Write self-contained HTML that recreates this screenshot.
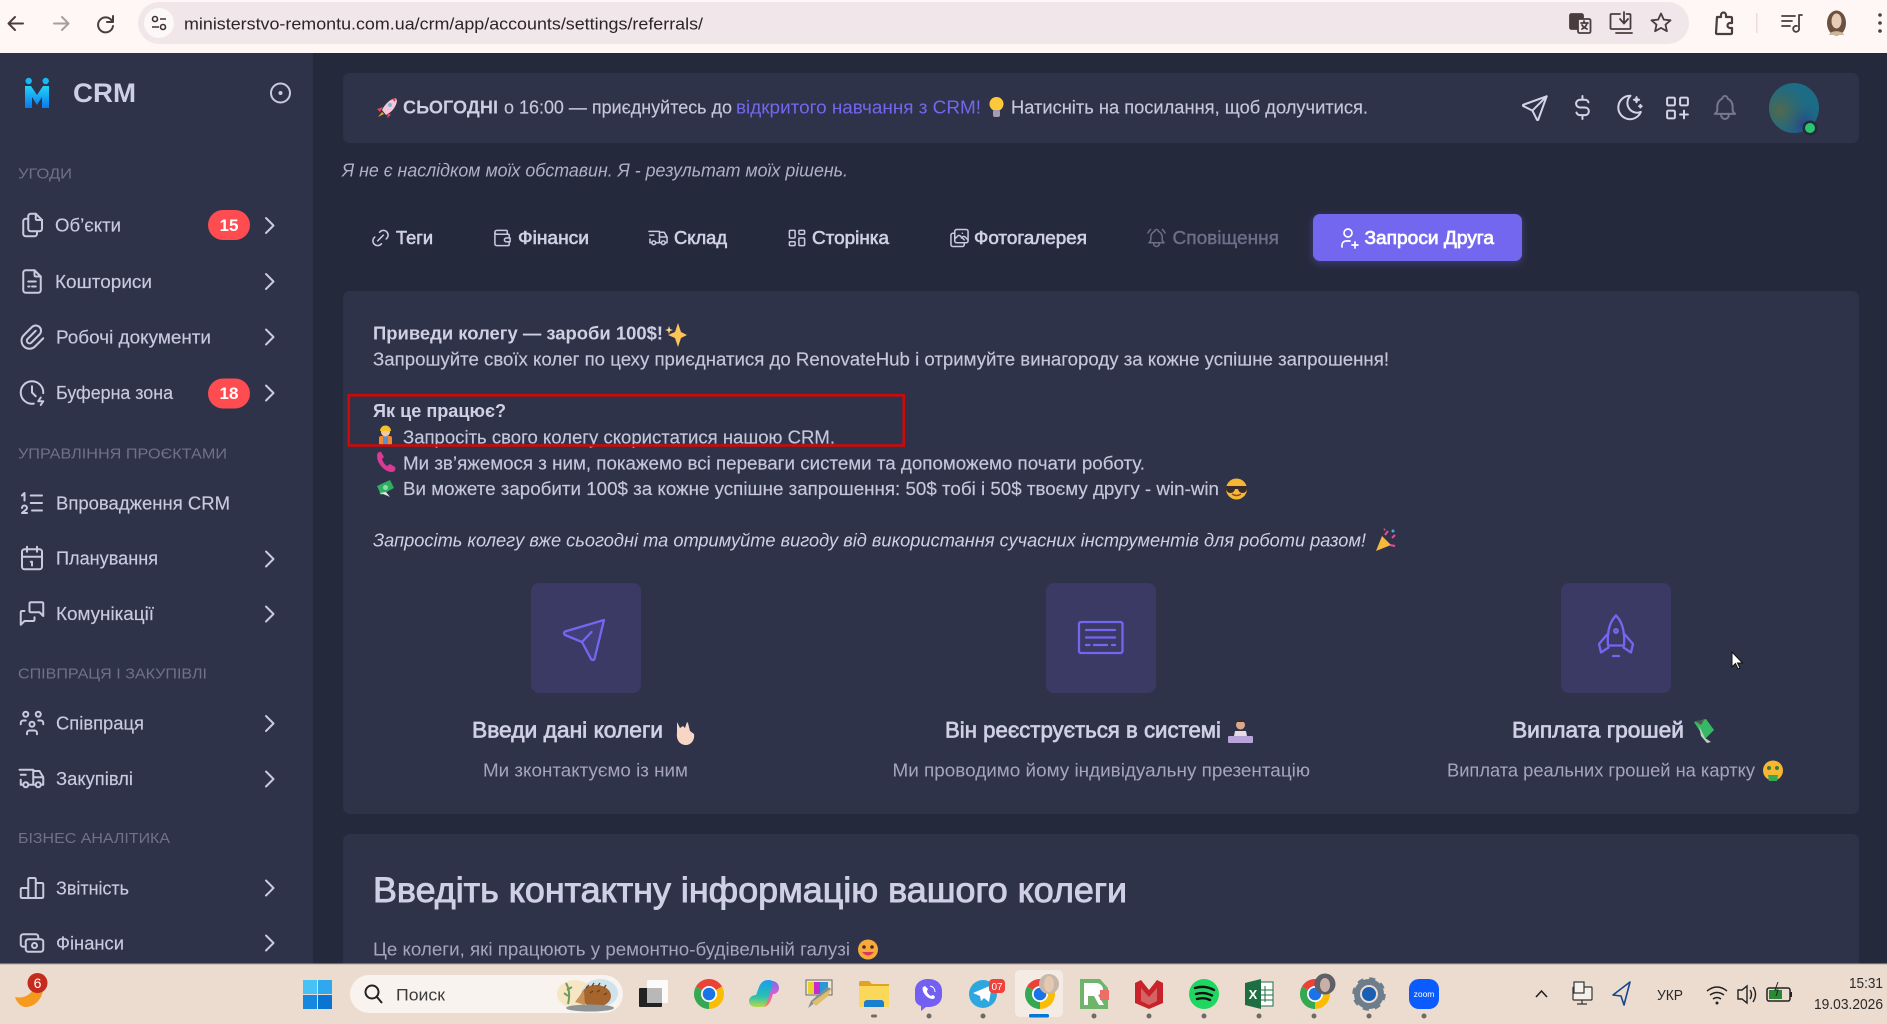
<!DOCTYPE html>
<html lang="uk"><head><meta charset="utf-8"><title>CRM</title>
<style>
html,body{margin:0;padding:0;width:1887px;height:1024px;overflow:hidden;background:#25293c}
svg{display:block;font-family:"Liberation Sans","Noto Sans CJK SC",sans-serif}
.i{fill:none;stroke:#c9cae0;stroke-width:1.6;stroke-linecap:round;stroke-linejoin:round}
.s{font-size:18px;fill:#c9cae0;stroke:#c9cae0;stroke-width:.15}
.h{font-size:15px;fill:#6f7188}
.b{font-size:18px;fill:#c6c7dc;stroke:#c6c7dc;stroke-width:.15}
.tab{font-size:18px;fill:#cfd0e4;stroke:#cfd0e4;stroke-width:.6}
.bd{font-size:18px;font-weight:bold;fill:#cfd0e4}
.sub{font-size:18px;fill:#a5a6bd}
.t3{font-size:22px;fill:#cfd0e6;stroke:#cfd0e6;stroke-width:.7}
.sys{font-size:15px;fill:#2a2a2a}
</style></head><body>
<svg xmlns="http://www.w3.org/2000/svg" width="1887" height="1024" viewBox="0 0 1887 1024">
<defs>
<path id="chev" d="M266 -7.500l7.500 7.500l-7.500 7.500" fill="none" stroke="#c9cae0" stroke-width="2" stroke-linecap="round" stroke-linejoin="round"/>
<linearGradient id="lg" x1="0" y1="0" x2="0" y2="1"><stop offset="0" stop-color="#22d3f5"/><stop offset="1" stop-color="#0a78f0"/></linearGradient>
<linearGradient id="cp1" x1="0" y1="0" x2="0" y2="1"><stop offset="0" stop-color="#1c9cf0"/><stop offset=".6" stop-color="#28c0b0"/><stop offset="1" stop-color="#b8d84a"/></linearGradient>
<linearGradient id="cp2" x1="0" y1="0" x2="0" y2="1"><stop offset="0" stop-color="#7c6cf0"/><stop offset=".55" stop-color="#e060c8"/><stop offset="1" stop-color="#f58a3a"/></linearGradient>
<radialGradient id="av1" cx=".65" cy=".82" r=".5"><stop offset="0" stop-color="#2a4488"/><stop offset="1" stop-color="#1a6a82" stop-opacity="0"/></radialGradient>
<radialGradient id="av2" cx=".22" cy=".55" r=".55"><stop offset="0" stop-color="#55694a"/><stop offset="1" stop-color="#3c6660" stop-opacity="0"/></radialGradient>
<g id="chrome"><path d="M15 15L2 7.500A15 15 0 0 1 28 7.500Z" fill="#ea4335"/><path d="M15 15L28 7.500A15 15 0 0 1 15 30Z" fill="#fbbc04"/><path d="M15 15L15 30A15 15 0 0 1 2 7.500Z" fill="#34a853"/><circle cx="15" cy="15" r="8" fill="#fff"/><circle cx="15" cy="15" r="6.300" fill="#1a73e8"/></g>
</defs>

<!-- browser bar -->
<rect width="1887" height="53" fill="#fff7f5"/>
<g fill="none" stroke="#4a3d40" stroke-width="2" stroke-linecap="round" stroke-linejoin="round">
<path d="M23 23.500H9M15 17l-6.500 6.500L15 30"/>
<path d="M54 23.500h14M62 17l6.500 6.500L62 30" stroke="#a89c9f"/>
<path d="M112 21a7.500 7.500 0 1 0 1 5M113 16v6h-6"/>
</g>
<rect x="138" y="2" width="1551" height="42" rx="21" fill="#f1e6e9"/>
<ellipse cx="159" cy="23" rx="15" ry="15" fill="#fdf8f8"/>
<g fill="none" stroke="#3d3336" stroke-width="1.600"><circle cx="155" cy="19" r="2.500"/><circle cx="163" cy="27" r="2.500"/><path d="M160 19h6M152 27h7"/></g>
<text x="184" y="29.500" font-size="17" fill="#2c2426" textLength="519" lengthAdjust="spacingAndGlyphs">ministerstvo-remontu.com.ua/crm/app/accounts/settings/referrals/</text>
<g fill="none" stroke="#4a3d40" stroke-width="1.800" stroke-linecap="round" stroke-linejoin="round">
<rect x="1570" y="14" width="13" height="15" rx="1.500" fill="#4a3d40"/><rect x="1578" y="19" width="12.500" height="14" rx="1.500" fill="#f1e6e9"/><path d="M1581 23h7M1584 21v2M1587 23c-.5 3-3 5-5 6M1582 25c1 2 3 3 5 4"/>
<path d="M1620 14h-8.500a1 1 0 0 0 -1 1v13a1 1 0 0 0 1 1h18a1 1 0 0 0 1 -1v-13a1 1 0 0 0 -1 -1h-3M1624 12v11M1620 19l4 4.500l4-4.500M1616 33h16" />
<path d="M1661 13.500l2.800 6.100 6.700.7-5 4.400 1.400 6.500-5.900-3.300-5.900 3.300 1.400-6.500-5-4.400 6.700-.7z"/>
<path d="M1717 17h4v-2a2.500 2.500 0 0 1 5 0v2h5a1 1 0 0 1 1 1v5h-2a2.500 2.500 0 0 0 0 5h2v5a1 1 0 0 1 -1 1h-14a1 1 0 0 1 -1 -1z" stroke-width="2.200"/>
<path d="M1782 16h13M1782 21h10M1782 26h8M1799 15v13a3 3 0 1 1 -2 -2M1799 15h3"/>
</g>
<rect x="1756" y="13" width="1.500" height="20" fill="#eedcdc"/>
<ellipse cx="1836.500" cy="23" rx="9.500" ry="12.500" fill="#6d5140"/><ellipse cx="1836.500" cy="21" rx="5" ry="7.500" fill="#e8cdb6"/><path d="M1829 35c1-5 14-5 15 0z" fill="#cdb59c"/>
<g fill="#4a3d40"><circle cx="1880" cy="15" r="1.800"/><circle cx="1880" cy="23" r="1.800"/><circle cx="1880" cy="31" r="1.800"/></g>

<!-- main bg -->
<rect x="0" y="53" width="1887" height="911" fill="#25293c"/>
<!-- sidebar -->
<rect x="0" y="53" width="313" height="911" fill="#2f3349"/>
<circle cx="28.700" cy="81" r="3.200" fill="#18b8f5"/><circle cx="45.700" cy="81" r="3.200" fill="#18b8f5"/>
<path d="M25 86h6l6 9 6-9h6v22h-7V97l-5 8-5-8v11h-7z" fill="url(#lg)"/>
<text x="73" y="102" font-size="27" font-weight="bold" fill="#cdcfe6" textLength="63" lengthAdjust="spacingAndGlyphs">CRM</text>
<circle cx="280.500" cy="93" r="9.500" fill="none" stroke="#c9cae0" stroke-width="2"/><circle cx="280.500" cy="93" r="2" fill="#c9cae0"/>

<text class="h" x="18" y="178.500" textLength="54" lengthAdjust="spacingAndGlyphs">УГОДИ</text>
<g class="i" transform="translate(17 210) scale(1.25)"><path d="M15 3v4a1 1 0 0 0 1 1h4"/><path d="M18 17h-7a2 2 0 0 1 -2 -2v-10a2 2 0 0 1 2 -2h4l5 5v7a2 2 0 0 1 -2 2z"/><path d="M16 17v2a2 2 0 0 1 -2 2h-7a2 2 0 0 1 -2 -2v-10a2 2 0 0 1 2 -2h2"/></g>
<text class="s" x="55" y="231.500" textLength="66" lengthAdjust="spacingAndGlyphs">Об’єкти</text>
<rect x="208" y="210" width="42" height="30" rx="15" fill="#ff4c51"/><text x="229" y="231" font-size="17" font-weight="bold" fill="#fff" text-anchor="middle">15</text>
<use href="#chev" y="225.500"/>

<g class="i" transform="translate(17 266.500) scale(1.25)"><path d="M14 3v4a1 1 0 0 0 1 1h4"/><path d="M17 21h-10a2 2 0 0 1 -2 -2v-14a2 2 0 0 1 2 -2h7l5 5v11a2 2 0 0 1 -2 2z"/><path d="M9 12h6M12 16h3M9 16h1"/></g>
<text class="s" x="55" y="288" textLength="97" lengthAdjust="spacingAndGlyphs">Кошториси</text>
<use href="#chev" y="281.500"/>

<g class="i" transform="translate(17 322) scale(1.25)"><path d="M15 7l-6.500 6.500a1.500 1.500 0 0 0 3 3l6.500 -6.500a3 3 0 0 0 -6 -6l-6.500 6.500a4.500 4.500 0 0 0 9 9l6.500 -6.500"/></g>
<text class="s" x="56" y="343.500" textLength="155" lengthAdjust="spacingAndGlyphs">Робочі документи</text>
<use href="#chev" y="337"/>

<g class="i" transform="translate(17 377.500) scale(1.25)"><path d="M20.984 12.530a9 9 0 1 0 -7.552 8.355"/><path d="M12 7v5l3 3"/><path d="M19 16l-2 3h4l-2 3"/></g>
<text class="s" x="56" y="399" textLength="117" lengthAdjust="spacingAndGlyphs">Буферна зона</text>
<rect x="208" y="378.500" width="42" height="30" rx="15" fill="#ff4c51"/><text x="229" y="399" font-size="17" font-weight="bold" fill="#fff" text-anchor="middle">18</text>
<use href="#chev" y="393"/>

<text class="h" x="18" y="458.500" textLength="209" lengthAdjust="spacingAndGlyphs">УПРАВЛІННЯ ПРОЄКТАМИ</text>
<g class="i" transform="translate(17 488) scale(1.25)"><path d="M11 6h9M11 12h9M12 18h8M4 16a2 2 0 1 1 4 0c0 .591 -.5 1 -1 1.500l-3 2.500h4M6 10v-6l-2 2"/></g>
<text class="s" x="56" y="509.500" textLength="174" lengthAdjust="spacingAndGlyphs">Впровадження CRM</text>

<g class="i" transform="translate(17 543) scale(1.25)"><path d="M4 7a2 2 0 0 1 2 -2h12a2 2 0 0 1 2 2v12a2 2 0 0 1 -2 2h-12a2 2 0 0 1 -2 -2v-12zM16 3v4M8 3v4M4 11h16M11 15h1M12 15v3"/></g>
<text class="s" x="56" y="564.500" textLength="102" lengthAdjust="spacingAndGlyphs">Планування</text>
<use href="#chev" y="559"/>

<g class="i" transform="translate(17 598.500) scale(1.25)"><path d="M21 14l-3 -3h-7a1 1 0 0 1 -1 -1v-6a1 1 0 0 1 1 -1h9a1 1 0 0 1 1 1v10"/><path d="M14 15v2a1 1 0 0 1 -1 1h-7l-3 3v-10a1 1 0 0 1 1 -1h2"/></g>
<text class="s" x="56" y="620" textLength="98" lengthAdjust="spacingAndGlyphs">Комунікації</text>
<use href="#chev" y="614"/>

<text class="h" x="18" y="678.500" textLength="189" lengthAdjust="spacingAndGlyphs">СПІВПРАЦЯ І ЗАКУПІВЛІ</text>
<g class="i" transform="translate(17 708) scale(1.25)"><path d="M10 13a2 2 0 1 0 4 0a2 2 0 0 0 -4 0M8 21v-1a2 2 0 0 1 2 -2h4a2 2 0 0 1 2 2v1M15 5a2 2 0 1 0 4 0a2 2 0 0 0 -4 0M17 10h2a2 2 0 0 1 2 2v1M5 5a2 2 0 1 0 4 0a2 2 0 0 0 -4 0M3 13v-1a2 2 0 0 1 2 -2h2"/></g>
<text class="s" x="56" y="729.500" textLength="88" lengthAdjust="spacingAndGlyphs">Співпраця</text>
<use href="#chev" y="723.500"/>

<g class="i" transform="translate(17 763.500) scale(1.25)"><path d="M7 17m-2 0a2 2 0 1 0 4 0a2 2 0 1 0 -4 0M17 17m-2 0a2 2 0 1 0 4 0a2 2 0 1 0 -4 0M5 17h-2v-4m-1 -8h11v12m-4 0h6m4 0h2v-6h-8m0 -5h5l3 5M3 9l4 0"/></g>
<text class="s" x="56" y="785" textLength="77" lengthAdjust="spacingAndGlyphs">Закупівлі</text>
<use href="#chev" y="779"/>

<text class="h" x="18" y="843" textLength="152" lengthAdjust="spacingAndGlyphs">БІЗНЕС АНАЛІТИКА</text>
<g class="i" transform="translate(17 873) scale(1.25)"><path d="M3 13a1 1 0 0 1 1 -1h4a1 1 0 0 1 1 1v6a1 1 0 0 1 -1 1h-4a1 1 0 0 1 -1 -1zM15 9a1 1 0 0 1 1 -1h4a1 1 0 0 1 1 1v10a1 1 0 0 1 -1 1h-4a1 1 0 0 1 -1 -1zM9 5a1 1 0 0 1 1 -1h4a1 1 0 0 1 1 1v14a1 1 0 0 1 -1 1h-4a1 1 0 0 1 -1 -1zM4 20h14"/></g>
<text class="s" x="56" y="894.500" textLength="73" lengthAdjust="spacingAndGlyphs">Звітність</text>
<use href="#chev" y="888"/>

<g class="i" transform="translate(17 928) scale(1.25)"><path d="M7 9m0 2a2 2 0 0 1 2 -2h10a2 2 0 0 1 2 2v6a2 2 0 0 1 -2 2h-10a2 2 0 0 1 -2 -2zM14 14m-2 0a2 2 0 1 0 4 0a2 2 0 1 0 -4 0M17 9v-2a2 2 0 0 0 -2 -2h-10a2 2 0 0 0 -2 2v6a2 2 0 0 0 2 2h2"/></g>
<text class="s" x="56" y="949.500" textLength="68" lengthAdjust="spacingAndGlyphs">Фінанси</text>
<use href="#chev" y="943"/>

<!-- top bar -->
<rect x="343" y="73" width="1516" height="70" rx="7" fill="#2f3349"/>
<path d="M396 98c-6 1-11 6-14 12l4 5c6-3 10-8 11-14z" fill="#f3c8d8"/><path d="M396 98l-4 1 3 3z" fill="#e8455a"/><path d="M383 107l-6 2 3 3zM388 113l-1 5 4-3z" fill="#e8455a"/><path d="M378 117l4-5 2 2z" fill="#f59e2e"/><circle cx="390" cy="105" r="2" fill="#7fb4e0"/>
<text class="bd" x="403" y="113.500" textLength="95" lengthAdjust="spacingAndGlyphs">СЬОГОДНІ</text>
<text class="b" x="504" y="113.500" textLength="228" lengthAdjust="spacingAndGlyphs">о 16:00 — приєднуйтесь до</text>
<text x="736" y="113.500" font-size="18" fill="#7367f0" textLength="245" lengthAdjust="spacingAndGlyphs">відкритого навчання з CRM!</text>
<circle cx="996.500" cy="104" r="7" fill="#fdc83a"/><rect x="993" y="110" width="7" height="7" rx="2" fill="#a69bb0"/>
<text class="b" x="1011" y="113.500" textLength="357" lengthAdjust="spacingAndGlyphs">Натисніть на посилання, щоб долучитися.</text>
<g class="i" style="stroke-width:1.550;stroke:#d3d4e8">
<g transform="translate(1519.400 92.400) scale(1.300)"><path d="M10 14l11 -11M21 3l-6.500 18a.55 .55 0 0 1 -1 0l-3.500 -7l-7 -3.500a.55 .55 0 0 1 0 -1l18 -6.500"/></g>
<g transform="translate(1567.100 92.100) scale(1.280)"><path d="M16.700 8a3 3 0 0 0 -2.700 -2h-4a3 3 0 0 0 0 6h4a3 3 0 0 1 0 6h-4a3 3 0 0 1 -2.700 -2M12 3v3m0 12v3"/></g>
<g transform="translate(1614.400 91.900) scale(1.300)"><path d="M12 3c.132 0 .263 0 .393 0a7.500 7.500 0 0 0 7.920 12.446a9 9 0 1 1 -8.313 -12.454zM17 4a2 2 0 0 0 2 2a2 2 0 0 0 -2 2a2 2 0 0 0 -2 -2a2 2 0 0 0 2 -2M19 11h2m-1 -1v2"/></g>
<g transform="translate(1661.900 92.400) scale(1.300)"><path d="M5 4h4a1 1 0 0 1 1 1v4a1 1 0 0 1 -1 1h-4a1 1 0 0 1 -1 -1v-4a1 1 0 0 1 1 -1M15 4h4a1 1 0 0 1 1 1v4a1 1 0 0 1 -1 1h-4a1 1 0 0 1 -1 -1v-4a1 1 0 0 1 1 -1M5 14h4a1 1 0 0 1 1 1v4a1 1 0 0 1 -1 1h-4a1 1 0 0 1 -1 -1v-4a1 1 0 0 1 1 -1M14 17h6m-3 -3v6"/></g>
<g transform="translate(1709.600 92.100) scale(1.280)" style="stroke:#77788f"><path d="M10 5a2 2 0 1 1 4 0a7 7 0 0 1 4 6v3a4 4 0 0 0 2 3h-16a4 4 0 0 0 2 -3v-3a7 7 0 0 1 4 -6M9 17v1a3 3 0 0 0 6 0v-1"/></g>
</g>
<circle cx="1794" cy="108" r="25" fill="#1d6c86"/><circle cx="1794" cy="108" r="25" fill="url(#av1)"/><circle cx="1794" cy="108" r="25" fill="url(#av2)"/>
<circle cx="1810" cy="128" r="7.500" fill="#25293c"/><circle cx="1810" cy="128" r="5" fill="#28c76f"/>

<text x="342" y="176.500" font-size="18" font-style="italic" fill="#b0b1c6" textLength="506" lengthAdjust="spacingAndGlyphs">Я не є наслідком моїх обставин. Я - результат моїх рішень.</text>

<!-- tabs -->
<g class="i">
<g transform="translate(369.100 226.600) scale(.95)"><path d="M9 15l6 -6M11 6l.463 -.536a5 5 0 0 1 7.071 7.072l-.534 .464M13 18l-.397 .534a5.068 5.068 0 0 1 -7.127 0a4.972 4.972 0 0 1 0 -7.071l.524 -.463"/></g>
<g transform="translate(491.100 226.600) scale(.95)"><path d="M17 8v-3a1 1 0 0 0 -1 -1h-10a2 2 0 0 0 0 4h12a1 1 0 0 1 1 1v3m0 4v3a1 1 0 0 1 -1 1h-12a2 2 0 0 1 -2 -2v-12M20 12v4h-4a2 2 0 0 1 0 -4h4"/></g>
<g transform="translate(647.100 226.600) scale(.95)"><path d="M7 17m-2 0a2 2 0 1 0 4 0a2 2 0 1 0 -4 0M17 17m-2 0a2 2 0 1 0 4 0a2 2 0 1 0 -4 0M5 17h-2v-4m-1 -8h11v12m-4 0h6m4 0h2v-6h-8m0 -5h5l3 5M3 9l4 0"/></g>
<g transform="translate(785.600 226.600) scale(.95)"><path d="M5 4h4a1 1 0 0 1 1 1v6a1 1 0 0 1 -1 1h-4a1 1 0 0 1 -1 -1v-6a1 1 0 0 1 1 -1M5 16h4a1 1 0 0 1 1 1v2a1 1 0 0 1 -1 1h-4a1 1 0 0 1 -1 -1v-2a1 1 0 0 1 1 -1M15 12h4a1 1 0 0 1 1 1v6a1 1 0 0 1 -1 1h-4a1 1 0 0 1 -1 -1v-6a1 1 0 0 1 1 -1M15 4h4a1 1 0 0 1 1 1v2a1 1 0 0 1 -1 1h-4a1 1 0 0 1 -1 -1v-2a1 1 0 0 1 1 -1"/></g>
<g transform="translate(948.100 226.600) scale(.95)"><rect x="7" y="3" width="14" height="14" rx="2"/><path d="M17 17v2a2 2 0 0 1 -2 2h-10a2 2 0 0 1 -2 -2v-10a2 2 0 0 1 2 -2h2M7 13l3 -3c.9 -.9 2 -.9 3 0l4 4M14 12l1 -1c.9 -.9 2 -.9 3 0l3 3M15 7h.01"/></g>
<g transform="translate(1145.100 226.600) scale(.95)" style="stroke:#6d6f87"><path d="M10 5a2 2 0 1 1 4 0a7 7 0 0 1 4 6v3a4 4 0 0 0 2 3h-16a4 4 0 0 0 2 -3v-3a7 7 0 0 1 4 -6M9 17v1a3 3 0 0 0 6 0v-1M21 6.727a11.050 11.050 0 0 0 -2.794 -3.727M3 6.727a11.050 11.050 0 0 1 2.792 -3.727"/></g>
</g>
<text class="tab" x="396" y="244" textLength="37" lengthAdjust="spacingAndGlyphs">Теги</text>
<text class="tab" x="518" y="244" textLength="71" lengthAdjust="spacingAndGlyphs">Фінанси</text>
<text class="tab" x="674" y="244" textLength="53" lengthAdjust="spacingAndGlyphs">Склад</text>
<text class="tab" x="812" y="244" textLength="77" lengthAdjust="spacingAndGlyphs">Сторінка</text>
<text class="tab" x="974" y="244" textLength="113" lengthAdjust="spacingAndGlyphs">Фотогалерея</text>
<text x="1172.500" y="244" font-size="18" fill="#6d6f87" stroke="#6d6f87" stroke-width=".4" textLength="106.500" lengthAdjust="spacingAndGlyphs">Сповіщення</text>
<rect x="1313" y="216" width="209" height="47" rx="6" fill="#7367f0" opacity=".35" style="filter:blur(4px)"/>
<rect x="1313" y="214" width="209" height="47" rx="7" fill="#7367f0"/>
<g class="i" style="stroke:#fff;stroke-width:1.700" transform="translate(1336 226)"><path d="M8 7a4 4 0 1 0 8 0a4 4 0 0 0 -8 0M16 19h6M19 16v6M6 21v-2a4 4 0 0 1 4 -4h4"/></g>
<text x="1364.500" y="244" font-size="18" fill="#fff" stroke="#fff" stroke-width=".7" textLength="129.500" lengthAdjust="spacingAndGlyphs">Запроси Друга</text>

<!-- card 1 -->
<rect x="343" y="291" width="1516" height="523" rx="7" fill="#2f3349"/>
<text class="bd" x="373" y="339.500" textLength="290" lengthAdjust="spacingAndGlyphs">Приведи колегу — зароби 100$!</text>
<path d="M678 323l3 9 6 3-6 3-3 9-3-9-7-3 7-3z" fill="#fbc55a"/><path d="M669 326l1 3 3 1-3 1-1 3-1-3-3-1 3-1z" fill="#fcd77f"/>
<text class="b" x="373" y="365.500" textLength="1016" lengthAdjust="spacingAndGlyphs">Запрошуйте своїх колег по цеху приєднатися до RenovateHub і отримуйте винагороду за кожне успішне запрошення!</text>
<text class="bd" x="373" y="417" textLength="133" lengthAdjust="spacingAndGlyphs">Як це працює?</text>
<rect x="379" y="436" width="13" height="9" rx="2" fill="#f08a2e"/><rect x="383" y="436" width="5" height="9" fill="#5b8fd0"/><circle cx="385.500" cy="432" r="4.500" fill="#f4c9a0"/><path d="M380 431a5.500 5.500 0 0 1 11 0z" fill="#f6c22c"/>
<text class="b" x="403" y="443.500" textLength="432" lengthAdjust="spacingAndGlyphs">Запросіть свого колегу скористатися нашою CRM.</text>
<path d="M377 456c0 7 7 16 15 16 3 0 4-3 3-5l-5-3-3 2c-2-1-4-4-5-7l2-2-3-5c-2-1-4 1-4 4z" fill="#d93a94"/>
<text class="b" x="403" y="469.500" textLength="742" lengthAdjust="spacingAndGlyphs">Ми зв’яжемося з ним, покажемо всі переваги системи та допоможемо почати роботу.</text>
<path d="M377 486l13-6 4 8-13 7z" fill="#2fae60"/><circle cx="385.500" cy="487.500" r="2.500" fill="#8fd8a8"/><path d="M379 493l4 1 5 2 2 1-4-5z" fill="#e8e8e8"/>
<text class="b" x="403" y="495" textLength="816" lengthAdjust="spacingAndGlyphs">Ви можете заробити 100$ за кожне успішне запрошення: 50$ тобі і 50$ твоєму другу - win-win</text>
<circle cx="1236.500" cy="489" r="10.500" fill="#f7b733"/><path d="M1226 486h21v2a4 4 0 0 1-9 1h-3a4 4 0 0 1-9-1z" fill="#3a2c2c"/><path d="M1232 494q4.500 3 9 0" stroke="#8a4a20" stroke-width="1.500" fill="none"/>
<text x="373" y="546.500" font-size="18" font-style="italic" fill="#cfd0e4" textLength="993" lengthAdjust="spacingAndGlyphs">Запросіть колегу вже сьогодні та отримуйте вигоду від використання сучасних інструментів для роботи разом!</text>
<path d="M1376 551l6-15 9 9z" fill="#f6b93b"/><path d="M1385 535l3-4M1392 538l3-3M1390 545l5 1M1384 530l1-1" stroke="#e44d8f" stroke-width="2"/><circle cx="1393" cy="531" r="1.500" fill="#4fa3e0"/>
<rect x="348.800" y="395.300" width="555" height="50.200" fill="none" stroke="#cc0a0a" stroke-width="2.600"/>

<rect x="531" y="583" width="110" height="110" rx="8" fill="#3a3a64"/>
<rect x="1046" y="583" width="110" height="110" rx="8" fill="#3a3a64"/>
<rect x="1561" y="583" width="110" height="110" rx="8" fill="#3a3a64"/>
<path d="M604 620L565 631.500Q563 633 565 635L582 642L591 659Q593 661 594.500 659Z" fill="#7367f0" fill-opacity=".15"/>
<g fill="none" stroke="#7367f0" stroke-width="2.300" stroke-linecap="round" stroke-linejoin="round">
<path d="M604 620L565 631.500Q563 633 565 635L582 642L591 659Q593 661 594.500 659ZM582 642L591.500 632"/>
<rect x="1079" y="622" width="43.500" height="31" rx="2"/><path d="M1086 630h29M1086 637.500h29M1086 645h3.500M1094 645h13M1112 645h3"/>
<path d="M1616 615.500c-7 7-9 17-8 30h16c1-13-1-23-8-30zM1608.500 633l-9.500 11 2 8.500 7.500-5M1623.500 633l9.500 11-2 8.500-7.500-5M1613 656h6"/>
<circle cx="1616" cy="631" r="1.800"/>
</g>

<text class="t3" x="472" y="737.500" textLength="191" lengthAdjust="spacingAndGlyphs">Введи дані колеги</text>
<path d="M677 722l3 6 3-2 2 2 2-6 1 1 2 8 4 3c1 6-3 11-8 11-6 0-10-5-9-12z" fill="#f7d6c6"/>
<text class="t3" x="945" y="737.500" textLength="276" lengthAdjust="spacingAndGlyphs">Він реєструється в системі</text>
<circle cx="1240.500" cy="725" r="4.500" fill="#d9a98a"/><path d="M1236 722q4.500-6 9 0z" fill="#3d2c2a"/><path d="M1235 731h11l1 5h-13z" fill="#e8dbe6"/><rect x="1228" y="736" width="25" height="7" rx="1" fill="#b7a4d8"/>
<text class="t3" x="1512" y="737.500" textLength="172" lengthAdjust="spacingAndGlyphs">Виплата грошей</text>
<path d="M1694 722l12-3 8 11-9 9z" fill="#36b866"/><path d="M1699 726l6 12 6 4-4 1-6-7z" fill="#bcd4b8"/><path d="M1695 721l9-1-3 5z" fill="#555"/>
<text class="sub" x="483" y="776.500" textLength="205" lengthAdjust="spacingAndGlyphs">Ми зконтактуємо із ним</text>
<text class="sub" x="892.500" y="776.500" textLength="417.500" lengthAdjust="spacingAndGlyphs">Ми проводимо йому індивідуальну презентацію</text>
<text class="sub" x="1447" y="776.500" textLength="308" lengthAdjust="spacingAndGlyphs">Виплата реальних грошей на картку</text>
<circle cx="1773" cy="770.500" r="10" fill="#f7b733"/><path d="M1768 775h10l-1 6h-8z" fill="#34a853"/><circle cx="1769" cy="768" r="2" fill="#3a7a3a"/><circle cx="1777" cy="768" r="2" fill="#3a7a3a"/>

<!-- card 2 -->
<rect x="343" y="834" width="1516" height="140" rx="7" fill="#2f3349"/>
<text x="373" y="902" font-size="35" fill="#cfd0e6" stroke="#cfd0e6" stroke-width=".9" textLength="754" lengthAdjust="spacingAndGlyphs">Введіть контактну інформацію вашого колеги</text>
<text class="sub" x="373" y="955.500" textLength="477" lengthAdjust="spacingAndGlyphs">Це колеги, які працюють у ремонтно-будівельній галузі</text>
<circle cx="868" cy="949.500" r="10" fill="#f7a93a"/><circle cx="864" cy="947" r="1.800" fill="#4a2c20"/><circle cx="872" cy="947" r="1.800" fill="#4a2c20"/><path d="M862 952q6 7 12 0z" fill="#d8385a"/>

<!-- cursor -->
<path d="M1732 652v15l3.500-3.500 2.500 5.500 2-1-2.500-5h5z" fill="#fff" stroke="#111" stroke-width="1"/>

<!-- taskbar -->
<rect y="964" width="1887" height="60" fill="#ecdcd0"/><rect y="963.500" width="1887" height="1" fill="#b8aca4"/>
<path d="M15 997c8 2 17-2 20-11l8-2c2 12-7 23-17 23-5 0-9-4-11-10z" fill="#f59a1f"/>
<circle cx="37.500" cy="983" r="10" fill="#c42b1c"/><text x="37.500" y="988" font-size="14" fill="#fff" text-anchor="middle">6</text>
<rect x="303" y="980" width="14" height="14" fill="#47c2f5"/><rect x="318" y="980" width="14" height="14" fill="#2fa8ee"/><rect x="303" y="995" width="14" height="14" fill="#1788e0"/><rect x="318" y="995" width="14" height="14" fill="#0a74d2"/>
<rect x="350" y="975" width="273" height="38" rx="19" fill="#f8f3ef"/>
<circle cx="372" cy="992" r="6.500" fill="none" stroke="#222" stroke-width="2"/><path d="M377 997l5 6" stroke="#222" stroke-width="2"/>
<text x="396" y="1000.500" font-size="17" fill="#3c3c3c" textLength="49" lengthAdjust="spacingAndGlyphs">Поиск</text>
<ellipse cx="575" cy="994" rx="18" ry="14" fill="#f6e6c4"/><ellipse cx="600" cy="993" rx="18" ry="14" fill="#cfe3ec"/>
<ellipse cx="596" cy="996" rx="15" ry="11" fill="#a5652c"/><path d="M584 990l-9 12 10 3z" fill="#c9915a"/><path d="M586 988l3-3M592 986l2-3M598 986l2-3M604 988l2-3M590 993l3-2M597 992l3-2M604 995l3-2" stroke="#6f3f18" stroke-width="1.300"/>
<ellipse cx="590" cy="1008" rx="24" ry="3.500" fill="#8d9496"/>
<path d="M568 1004q3-12-2-21M568 996l-4-3M567 990l5-3" stroke="#6d9c5a" stroke-width="2" fill="none"/>
<rect x="647" y="980" width="21" height="23" rx="1.500" fill="#fbfbfb"/><rect x="639" y="988" width="23" height="19" rx="1" fill="#222"/><rect x="647" y="988" width="15" height="15" fill="#b8b8b8"/>
<use href="#chrome" x="694" y="979"/>
<path d="M769 980c-5 0-8 2-10 7l-3 8c-4 0-7 3-7 6 0 4 3 6 7 6h5c4 0 6-2 7-5l6-17c1-3-2-5-5-5z" fill="url(#cp1)"/>
<path d="M762 1007c4 0 7-2 9-7l2-6c4 0 6-3 6-6 0-4-3-7-7-7h-2c3 1 3 3 2 6l-5 15c-1 3-3 5-5 5z" fill="url(#cp2)"/>
<rect x="806" y="980" width="26" height="15" fill="#ece6dc" stroke="#666"/><rect x="808" y="982" width="6" height="12" fill="#e6d42a"/><rect x="814" y="982" width="6" height="12" fill="#c72bd0"/><rect x="820" y="982" width="8" height="12" fill="#2b98d6"/><path d="M832 989l-20 16-4 3 3-7 16-14z" fill="#7f8f96"/><path d="M826 992l6-4-4 8-12 10-4-4z" fill="#e0bd6a"/>
<path d="M859 983a2 2 0 0 1 2-2h8l3 3h17v6h-30z" fill="#e0a422"/><rect x="859" y="986" width="30" height="21" fill="#fbd75a"/><path d="M864 1003a3 3 0 0 1 3-3h14a3 3 0 0 1 3 3v4h-20z" fill="#1b7fd0"/>
<path d="M928 979c-7 0-13 4-13 12v7c0 5 3 7 6 8v5l5-4h2c8 0 14-4 14-12v-4c0-8-6-12-14-12z" fill="#7360f2"/><path d="M923 987c-2 3 3 12 10 12 3-1 2-3 0-4l-2 1c-2-1-4-3-4-5l1-2-3-3z" fill="#fff"/><path d="M930 986q5 1 5 6" stroke="#fff" fill="none"/>
<rect x="871" y="1014.500" width="6" height="3" rx="1.500" fill="#6e6a66"/><circle cx="929" cy="1016" r="2.500" fill="#6e6a66"/>
<circle cx="983" cy="994" r="14" fill="#2ea6de"/><path d="M973 993l19-8-3 17-5-4-3 3-1-5z" fill="#fff"/>
<rect x="989" y="979" width="16" height="14" rx="4" fill="#f0423c"/><text x="997" y="990" font-size="10" fill="#fff" text-anchor="middle">07</text>
<circle cx="983" cy="1016" r="2.500" fill="#6e6a66"/>
<rect x="1015" y="970" width="48" height="47" rx="5" fill="#f5ebe5"/>
<use href="#chrome" x="1025" y="979"/><circle cx="1049" cy="984" r="10" fill="#c8b8aa"/><ellipse cx="1049" cy="984" rx="5" ry="8" fill="#e4c8b0"/>
<rect x="1029" y="1014" width="20" height="3.500" rx="1.500" fill="#0078d4"/>
<path d="M1080 979h20l8 9v21h-28z" fill="#6eb46a"/><path d="M1084 983v22h4v-9h6l5 9h5l-6-10c3-1 5-3 5-6s-3-6-7-6z" fill="#fff"/><path d="M1100 990h9v10h-9z" fill="#ee6d66"/>
<circle cx="1094" cy="1016" r="2.500" fill="#6e6a66"/>
<path d="M1135 983l6-3 8 10 8-10 6 3v20l-14 6-14-6z" fill="#c8232a"/><path d="M1141 988v13l8 4 8-4v-13l-8 9z" fill="#ecdcd0" opacity=".35"/>
<circle cx="1149" cy="1016" r="2.500" fill="#6e6a66"/>
<circle cx="1204" cy="994" r="15" fill="#1ed760"/><path d="M1195 988q10-3 19 2M1196 994q8-2.500 16 1.500M1197 999q7-2 13 1" stroke="#111" stroke-width="2.400" fill="none" stroke-linecap="round"/>
<circle cx="1204" cy="1016" r="2.500" fill="#6e6a66"/>
<rect x="1256" y="982" width="17" height="24" fill="#fff" stroke="#1d6f42"/><path d="M1260 986v16M1265 986v16M1257 990h16M1257 995h16M1257 1000h16" stroke="#1d6f42"/><path d="M1245 983l16-4v30l-16-4z" fill="#1d6f42"/><text x="1253" y="999" font-size="13" font-weight="bold" fill="#fff" text-anchor="middle">X</text>
<circle cx="1259" cy="1016" r="2.500" fill="#6e6a66"/>
<use href="#chrome" x="1300" y="979"/><circle cx="1325" cy="984" r="10.500" fill="#5f5f66"/><ellipse cx="1325" cy="985" rx="5" ry="7" fill="#c8b0a8"/>
<circle cx="1314" cy="1016" r="2.500" fill="#6e6a66"/>
<circle cx="1369" cy="994" r="12" fill="none" stroke="#6d7d8c" stroke-width="6"/><circle cx="1369" cy="994" r="15" fill="none" stroke="#6d7d8c" stroke-width="3.500" stroke-dasharray="6 5.800"/><circle cx="1369" cy="994" r="7" fill="#1a5fb4"/>
<circle cx="1369" cy="1016" r="2.500" fill="#6e6a66"/>
<rect x="1409" y="979" width="30" height="30" rx="10" fill="#0b5cff"/><text x="1424" y="997" font-size="8.500" fill="#fff" text-anchor="middle">zoom</text>
<circle cx="1424" cy="1016" r="2.500" fill="#6e6a66"/>
<path d="M1536 997l5.500-6 5.500 6" fill="none" stroke="#222" stroke-width="1.600"/>
<g fill="none" stroke="#333" stroke-width="1.200"><rect x="1573" y="987" width="19" height="13" rx="1" fill="#f5f0ea"/><rect x="1574" y="982" width="10" height="11" fill="#f5f0ea"/><path d="M1582 1000v4M1577 1004h10"/></g>
<path d="M1630 982l-17 13 8 1 3 9z" fill="none" stroke="#15468f" stroke-width="1.600" stroke-linejoin="round"/>
<text class="sys" x="1657" y="1000" textLength="26" lengthAdjust="spacingAndGlyphs">УКР</text>
<path d="M1707 991q10-8 20 0M1710 995q7-5 14 0M1713 999q4-3 8 0" fill="none" stroke="#222" stroke-width="1.500"/><circle cx="1717" cy="1003" r="1.500" fill="#222"/>
<path d="M1738 990h4l5-4v17l-5-4h-4zM1750 990q3 4 0 9M1753 987q5 7 0 15" fill="none" stroke="#222" stroke-width="1.400"/>
<rect x="1767" y="988" width="23" height="13" rx="2" fill="none" stroke="#222" stroke-width="1.500"/><rect x="1790" y="992" width="2" height="5" fill="#222"/><rect x="1769" y="990" width="13" height="9" fill="#2a8a34"/><path d="M1778 982l-3 8h3l-2 6" stroke="#222" fill="none"/>
<text class="sys" x="1849" y="988" textLength="34" lengthAdjust="spacingAndGlyphs">15:31</text>
<text class="sys" x="1814" y="1009" textLength="69" lengthAdjust="spacingAndGlyphs">19.03.2026</text>
</svg>
</body></html>
